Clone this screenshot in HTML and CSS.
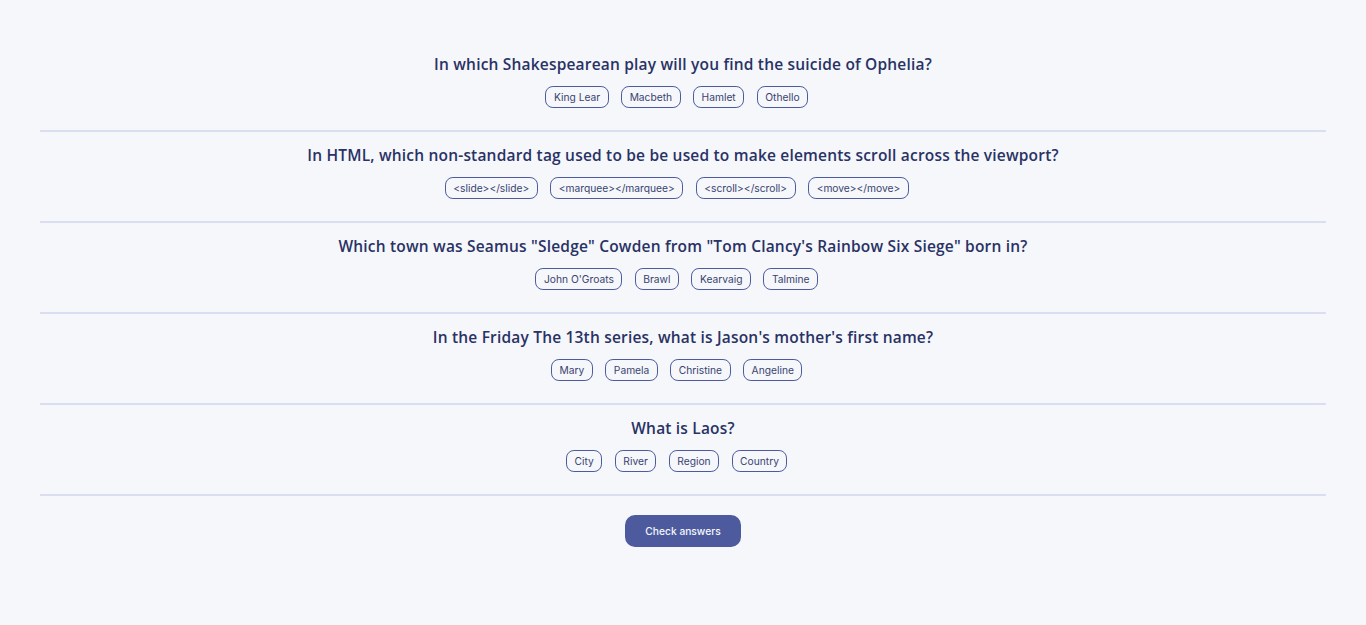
FILE: index.html
```html
<!DOCTYPE html>
<html lang="en">
<head>
<meta charset="utf-8">
<title>Quizzical</title>
<link rel="stylesheet" href="styles.css">
</head>
<body>
<main class="quiz">
  <section class="question">
    <h2 class="question-title">In which Shakespearean play will you find the suicide of Ophelia?</h2>
    <div class="answers">
      <button class="answer">King Lear</button>
      <button class="answer">Macbeth</button>
      <button class="answer">Hamlet</button>
      <button class="answer">Othello</button>
    </div>
  </section>
  <section class="question">
    <h2 class="question-title">In HTML, which non-standard tag used to be be used to make elements scroll across the viewport?</h2>
    <div class="answers">
      <button class="answer">&lt;slide&gt;&lt;/slide&gt;</button>
      <button class="answer">&lt;marquee&gt;&lt;/marquee&gt;</button>
      <button class="answer">&lt;scroll&gt;&lt;/scroll&gt;</button>
      <button class="answer">&lt;move&gt;&lt;/move&gt;</button>
    </div>
  </section>
  <section class="question">
    <h2 class="question-title">Which town was Seamus "Sledge" Cowden from "Tom Clancy's Rainbow Six Siege" born in?</h2>
    <div class="answers">
      <button class="answer">John O'Groats</button>
      <button class="answer">Brawl</button>
      <button class="answer">Kearvaig</button>
      <button class="answer">Talmine</button>
    </div>
  </section>
  <section class="question">
    <h2 class="question-title">In the Friday The 13th series, what is Jason's mother's first name?</h2>
    <div class="answers">
      <button class="answer">Mary</button>
      <button class="answer">Pamela</button>
      <button class="answer">Christine</button>
      <button class="answer">Angeline</button>
    </div>
  </section>
  <section class="question">
    <h2 class="question-title">What is Laos?</h2>
    <div class="answers">
      <button class="answer">City</button>
      <button class="answer">River</button>
      <button class="answer">Region</button>
      <button class="answer">Country</button>
    </div>
  </section>
  <div class="actions">
    <button class="check-btn">Check answers</button>
  </div>
</main>
</body>
</html>
```

FILE: styles.css
```css
* { box-sizing: border-box; }
html, body {
  margin: 0;
  padding: 0;
  background: #F5F7FB;
}
body {
  font-family: Inter, "Noto Sans", sans-serif;
  color: #293264;
}
.quiz {
  padding: 54px 40px 0;
}
.question {
  padding: 0 0 22px;
  border-bottom: 2px solid #DBDEF0;
  margin-bottom: 13px;
  text-align: center;
}
.question-title {
  margin: 0 0 12px;
  font-family: "Open Sans", sans-serif;
  font-weight: 600;
  font-size: 15.5px;
  letter-spacing: 0.19px;
  line-height: 20px;
  color: #293264;
}
.answers {
  display: flex;
  justify-content: center;
}
.answer {
  font-family: Inter, sans-serif;
  font-size: 10.24px;
  line-height: 12px;
  color: #3a4370;
  background: transparent;
  border: 0.8px solid #4D5B9E;
  border-radius: 7.9px;
  padding: 4px 7.5px;
  margin-right: 12.5px;
  height: 22px;
  cursor: pointer;
}
.actions {
  display: flex;
  justify-content: center;
  padding-top: 6px;
}
.check-btn {
  font-family: Inter, sans-serif;
  font-size: 10.24px;
  font-weight: 500;
  color: #F5F7FB;
  background: #4D5B9E;
  border: none;
  border-radius: 10px;
  width: 116px;
  height: 32px;
  cursor: pointer;
}
```
